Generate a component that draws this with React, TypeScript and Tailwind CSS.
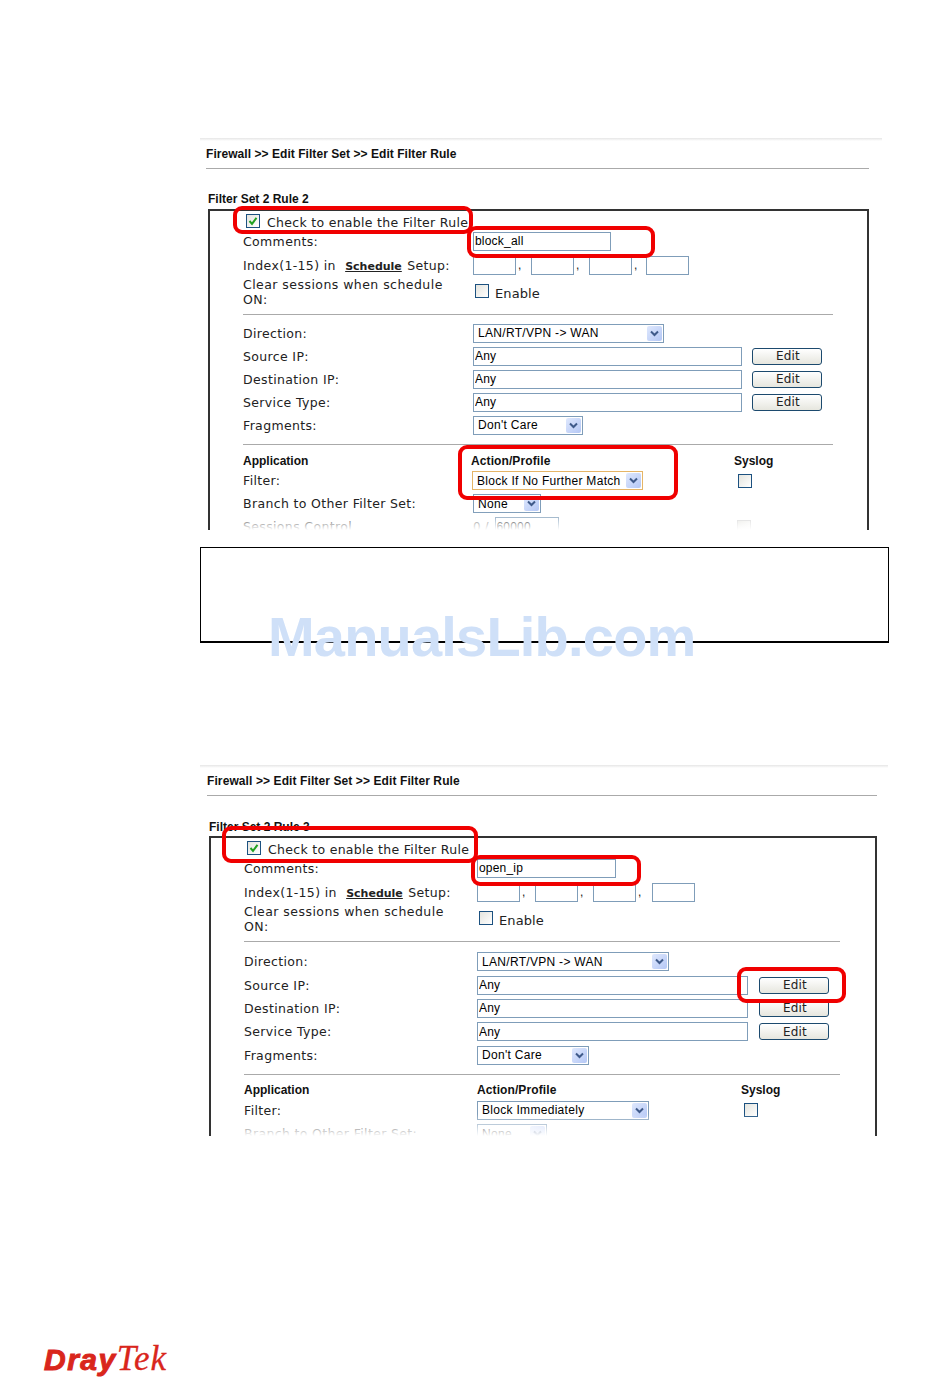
const sans = "font-['Liberation_Sans',Arial,sans-serif]";
const dejavu = "font-['DejaVu_Sans',Verdana,sans-serif]";

function Checkbox({ checked = false, faded = false, className = '' }: { checked?: boolean; faded?: boolean; className?: string }) {
  return (
    <div
      className={
        'shrink-0 w-[14px] h-[14px] border flex items-center justify-center bg-gradient-to-br from-[#e4e4de] to-white ' +
        (faded ? 'border-[#d0d0d0] ' : 'border-[#1c5180] ') +
        className
      }
    >
      {checked && (
        <svg width="12" height="12" viewBox="0 0 12 12" fill="none">
          <path d="M2.5 6 L5 8.8 L9.5 2.8" stroke="#21a121" strokeWidth="2" />
        </svg>
      )}
    </div>
  );
}

function Select({ text, className, focus = false }: { text: string; className: string; focus?: boolean }) {
  return (
    <div
      className={
        `h-[19px] flex items-center justify-between pl-[4px] pr-[1px] border bg-white text-[12px] tracking-[0.3px] text-black ${sans} ` +
        (focus ? 'border-[#e5b567] ' : 'border-[#7f9db9] ') +
        className
      }
    >
      <span className="whitespace-nowrap">{text}</span>
      <span className="w-[15px] h-[15px] rounded-[2px] bg-gradient-to-br from-[#dfe8fd] to-[#b4c7f5] flex items-center justify-center">
        <svg width="9" height="7" viewBox="0 0 9 7" fill="none">
          <path d="M1 1.5 L4.5 5 L8 1.5" stroke="#3f5a8a" strokeWidth="2" />
        </svg>
      </span>
    </div>
  );
}

function TextBox({ value = '', className }: { value?: string; className: string }) {
  return (
    <input
      readOnly
      value={value}
      className={`h-[19px] border border-[#7f9db9] bg-white pl-[1px] text-[12px] tracking-[0.2px] text-black outline-none ${sans} ${className}`}
    />
  );
}

function EditButton({ className }: { className: string }) {
  return (
    <button
      className={`h-[17px] rounded-[3px] border border-[#1c4a6e] bg-gradient-to-b from-white to-[#e6e6de] pl-[2px] text-[12px] leading-none tracking-[0.2px] text-[#222] ${dejavu} ${className}`}
    >
      Edit
    </button>
  );
}

interface PanelProps {
  comment: string;
  title: string;
  filterText: string;
  focusFilter?: boolean;
  small?: boolean;
}

function Panel({ comment, title, filterText, focusFilter = false, small = false }: PanelProps) {
  const labelW = small ? 'w-[233px]' : 'w-[230px]';
  const rowH = small ? 'h-[23.4px]' : 'h-[23px]';
  const inputW = small ? 'w-[271px]' : 'w-[269px]';
  const editMl = small ? 'ml-[11px] w-[70px]' : 'ml-[10px] w-[70px]';
  const labelCls = `shrink-0 ${labelW} pt-[2px] text-[12.5px] tracking-[0.35px] text-[#222] ${dejavu}`;
  const boldCls = `text-[12px] font-bold text-[#111] ${sans}`;

  const addressRow = (label: string) => (
    <div className={`flex items-center ${rowH}`} key={label}>
      <div className={labelCls}>{label}</div>
      <TextBox value="Any" className={inputW} />
      <EditButton className={editMl} />
    </div>
  );

  return (
    <div className={small ? 'w-[688px]' : 'w-[682px]'}>
      <div className="h-[3px] bg-gradient-to-b from-[#e6e6e6] to-white" />
      <div className={small ? 'pl-[7px] w-[677px]' : 'pl-[6px] w-[669px]'}>
        <div
          className={`h-[28px] pb-[2px] flex items-center border-b border-[#aaa] text-[12px] font-bold text-[#111] ${sans} ${
            small ? 'tracking-[0.1px]' : 'tracking-[0.05px]'
          }`}
        >
          Firewall &gt;&gt; Edit Filter Set &gt;&gt; Edit Filter Rule
        </div>
      </div>
      <div className={small ? 'pl-[9px] w-[677px]' : 'pl-[8px] w-[669px]'}>
        <div className={`h-[40px] flex items-end ${small ? 'pb-0' : 'pb-[1px]'} ${boldCls}`}>{title}</div>
        <div className={`relative overflow-hidden border-2 border-b-0 border-[#333] pl-[33px] ${small ? 'h-[300px] pr-[35px]' : 'h-[321px] pr-[34px]'}`}>
          <div className="flex items-center h-[18px] mt-[2px] pl-[3px] gap-[7px]">
            <Checkbox checked className="mb-[2px]" />
            <span className={`pt-[2px] text-[12.5px] tracking-[0.3px] text-[#222] whitespace-nowrap ${dejavu}`}>Check to enable the Filter Rule</span>
          </div>
          <div className="flex items-center h-[20px]">
            <div className={labelCls}>Comments:</div>
            <TextBox value={comment} className={small ? 'w-[139px]' : 'w-[138px]'} />
          </div>
          <div className="flex items-center h-[28px]">
            <div className={labelCls}>
              Index(1-15) in <span className="font-bold underline text-[11px] tracking-normal ml-[5px] mr-[1px]">Schedule</span> Setup:
            </div>
            <div className="flex items-center">
              <TextBox className="w-[43px]" />
              <span className={`w-[15px] pl-[2px] text-[12px] text-[#222] ${sans}`}>,</span>
              <TextBox className="w-[43px]" />
              <span className={`w-[15px] pl-[2px] text-[12px] text-[#222] ${sans}`}>,</span>
              <TextBox className="w-[43px]" />
              <span className={`${small ? 'w-[16px]' : 'w-[14px]'} pl-[2px] text-[12px] text-[#222] ${sans}`}>,</span>
              <TextBox className="w-[43px]" />
            </div>
          </div>
          <div className="flex items-center h-[25px] mb-[10px]">
            <div className={`shrink-0 ${labelW} pr-[10px] leading-[15px] text-[12.5px] tracking-[0.45px] text-[#222] ${dejavu}`}>Clear sessions when schedule ON:</div>
            <div className="flex items-center gap-[6px] pl-[2px]">
              <Checkbox className="-mt-[1px]" />
              <span className={`pt-[4px] text-[13px] tracking-[0.1px] text-[#222] ${dejavu}`}>Enable</span>
            </div>
          </div>

          <div className={`border-t border-[#aaa] ${small ? 'pt-[8px] pb-[7px]' : 'pt-[6.5px] pb-[7.5px]'}`}>
            <div className={`flex items-center ${rowH}`}>
              <div className={labelCls}>Direction:</div>
              <Select text="LAN/RT/VPN -> WAN" className={small ? 'w-[192px]' : 'w-[191px]'} />
            </div>
            {addressRow('Source IP:')}
            {addressRow('Destination IP:')}
            {addressRow('Service Type:')}
            <div className={`flex items-center ${rowH}`}>
              <div className={labelCls}>Fragments:</div>
              <Select text="Don't Care" className={small ? 'w-[112px]' : 'w-[110px]'} />
            </div>
          </div>

          <div className="border-t border-[#aaa] pt-[5px]">
            <div className="flex items-center h-[19px] pt-[2px]">
              <div className={`${labelW} shrink-0 ${boldCls}`}>Application</div>
              <div className={`${small ? 'w-[264px]' : 'w-[263px] -ml-[2px]'} tracking-[0.1px] ${boldCls}`}>Action/Profile</div>
              <div className={boldCls}>Syslog</div>
            </div>
            <div className="flex items-center h-[23px]">
              <div className={labelCls}>Filter:</div>
              <div className={small ? 'w-[267px] shrink-0' : 'w-[266px] -ml-[1px] shrink-0'}>
                <Select text={filterText} focus={focusFilter} className={small ? 'w-[172px]' : 'w-[171px]'} />
              </div>
              <Checkbox />
            </div>
            <div className={`flex items-center ${rowH}`}>
              <div className={labelCls}>Branch to Other Filter Set:</div>
              <Select text="None" className={small ? 'w-[70px]' : 'w-[68px]'} />
            </div>
            <div className={`flex items-center ${rowH}`}>
              <div className={labelCls}>Sessions Control</div>
              <span className={`text-[12px] text-[#666] mr-[6px] ${dejavu}`}>0 /</span>
              <TextBox value="60000" className="w-[64px]" />
              <div className="ml-[178px]">
                <Checkbox faded />
              </div>
            </div>
          </div>
          <div className={`absolute left-0 right-0 bottom-0 bg-gradient-to-b from-transparent to-white ${small ? 'h-[22px]' : 'h-[18px]'}`} />
        </div>
      </div>
    </div>
  );
}

function Highlight({ className }: { className: string }) {
  return <div className={`absolute border-[4px] border-[#f00000] rounded-[9px] ${className}`} />;
}

export default function App() {
  return (
    <div className="relative w-[950px] h-[1387px] overflow-hidden bg-white pt-[138px]">
      <div className="ml-[200px]">
        <Panel title="Filter Set 2 Rule 2" comment="block_all" filterText="Block If No Further Match" focusFilter />
      </div>

      <div className="ml-[200px] mt-[17px] w-[689px] h-[96px] border border-black border-b-2 bg-white" />

      <div className="ml-[200px] mt-[122px]">
        <Panel small title="Filter Set 2 Rule 3" comment="open_ip" filterText="Block Immediately" />
      </div>

      <div className="ml-[44px] mt-[205px] flex items-baseline leading-none text-[#d9261c]">
        <span className={`text-[30px] font-bold italic tracking-[1.5px] [-webkit-text-stroke:1px_#d9261c] ${sans}`}>Dray</span>
        <span className="text-[35px] tracking-[1px] italic [-webkit-text-stroke:0.3px_#d9261c] font-['Liberation_Serif',serif]">Tek</span>
      </div>

      <Highlight className="left-[233px] top-[206px] w-[240px] h-[28px]" />
      <Highlight className="left-[467px] top-[226px] w-[188px] h-[32px]" />
      <Highlight className="left-[458px] top-[445px] w-[220px] h-[55px]" />
      <Highlight className="left-[222px] top-[826px] w-[256px] h-[37px]" />
      <Highlight className="left-[471px] top-[855px] w-[170px] h-[31px]" />
      <Highlight className="left-[737px] top-[967px] w-[109px] h-[36px]" />

      <div className={`absolute left-[268px] top-[605px] text-[56px] leading-[64px] tracking-[-0.8px] font-bold text-[#cfe0f8] whitespace-nowrap ${sans}`}>
        ManualsLib.com
      </div>
    </div>
  );
}
